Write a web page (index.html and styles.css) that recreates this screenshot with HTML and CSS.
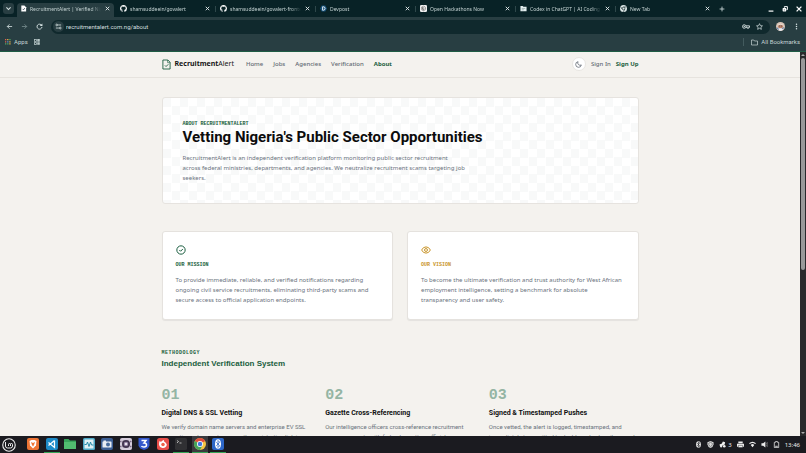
FILE: index.html
```html
<!DOCTYPE html>
<html lang="en">
<head>
<meta charset="utf-8">
<meta name="viewport" content="width=device-width, initial-scale=1">
<title>RecruitmentAlert | Verified</title>
<link rel="stylesheet" href="styles.css">
</head>
<body>
<svg class="sprite" aria-hidden="true">
  <symbol id="github" viewBox="0 0 16 16"><path fill="#fff" d="M8 0C3.58 0 0 3.58 0 8c0 3.54 2.29 6.53 5.47 7.59.4.07.55-.17.55-.38v-1.34c-2.23.48-2.7-1.07-2.7-1.07-.36-.93-.89-1.17-.89-1.17-.73-.5.05-.49.05-.49.81.06 1.23.83 1.23.83.72 1.23 1.88.87 2.34.67.07-.52.28-.88.51-1.08-1.78-.2-3.64-.89-3.64-3.95 0-.87.31-1.59.82-2.15-.08-.2-.36-1.02.08-2.12 0 0 .67-.21 2.2.82a7.6 7.6 0 0 1 4 0c1.53-1.04 2.2-.82 2.2-.82.44 1.1.16 1.92.08 2.12.51.56.82 1.27.82 2.15 0 3.07-1.87 3.75-3.65 3.95.29.25.54.73.54 1.48v2.19c0 .21.15.46.55.38A8 8 0 0 0 16 8c0-4.42-3.58-8-8-8z"/></symbol>
  <symbol id="close" viewBox="0 0 10 10"><path d="M1.5 1.5l7 7M8.5 1.5l-7 7" stroke="#e6eeee" stroke-width="1.8"/></symbol>
</svg>

<header class="browser">
  <div class="tabstrip">
    <button class="tab-search" aria-label="Search tabs"><svg viewBox="0 0 10 10"><path d="M2 3.5l3 3 3-3" fill="none" stroke="#d5e2e2" stroke-width="1.6"/></svg></button>
    <div class="tabs">
      <div class="tab active"><svg class="fav" viewBox="0 0 16 16"><path d="M3 1h7l4 4v10H3z" fill="#fff"/><path d="M6 9l2 2 3-4" fill="none" stroke="#234" stroke-width="1.6"/></svg><span>RecruitmentAlert | Verified Nigeria</span><button aria-label="Close"><svg><use href="#close"/></svg></button></div>
      <div class="tab"><svg class="fav"><use href="#github"/></svg><span>shamsuddeein/govalert</span><button aria-label="Close"><svg><use href="#close"/></svg></button></div>
      <div class="tab"><svg class="fav"><use href="#github"/></svg><span>shamsuddeein/govalert-frontend</span><button aria-label="Close"><svg><use href="#close"/></svg></button></div>
      <div class="tab"><svg class="fav" viewBox="0 0 16 16"><path d="M4 1h8l4 7-4 7H4L0 8z" fill="#14507a"/><path d="M6 4v8h1.500q4 0 4-4t-4-4z" fill="none" stroke="#fff" stroke-width="2"/></svg><span>Devpost</span><button aria-label="Close"><svg><use href="#close"/></svg></button></div>
      <div class="tab"><svg class="fav" viewBox="0 0 16 16"><rect width="16" height="16" rx="3" fill="#f1f1f1"/><g fill="none" stroke="#555" stroke-width="1"><path d="M8 2.500l4.700 2.700v5.500L8 13.500l-4.700-2.800V5.200z"/><path d="M5.500 4v5L8 10.500l4.500-2.600M8 13V8l-4-2.500M10.500 4L6 6.700v5"/></g></svg><span>Open Hackathons Now</span><button aria-label="Close"><svg><use href="#close"/></svg></button></div>
      <div class="tab"><svg class="fav" viewBox="0 0 16 16"><path d="M1 2h5l2 2h7v10H1z" fill="#e3eeee"/><path d="M4 8h8M4 11h5" stroke="#65797b"/></svg><span>Codex in ChatGPT | AI Coding</span><button aria-label="Close"><svg><use href="#close"/></svg></button></div>
      <div class="tab"><svg class="fav" viewBox="0 0 16 16"><circle cx="8" cy="8" r="8" fill="#dce6e6"/><circle cx="8" cy="8" r="3" fill="#dce6e6" stroke="#16292c" stroke-width="1.500"/><path d="M8 4.500h7M5 9.500L1.500 4M11 9.500L7.500 15.500" stroke="#16292c" stroke-width="1.500"/></svg><span>New Tab</span><button aria-label="Close"><svg><use href="#close"/></svg></button></div>
    </div>
    <button class="new-tab" aria-label="New tab"><svg viewBox="0 0 10 10"><path d="M5 1v8M1 5h8" stroke="#cfdddd" stroke-width="1.400"/></svg></button>
    <div class="window-buttons">
      <button aria-label="Minimize"><svg viewBox="0 0 10 10"><path d="M1 8.500h8" stroke="#fff" stroke-width="2"/></svg></button>
      <button aria-label="Restore"><svg viewBox="0 0 10 10"><path d="M4 3V1h5v5H7.500" fill="none" stroke="#fff" stroke-width="1.600"/><rect x="1" y="3.500" width="6" height="5.500" rx="1" fill="#fff"/><path d="M3 6.500h2" stroke="#0b2226"/></svg></button>
      <button aria-label="Close window"><svg viewBox="0 0 10 10"><path d="M1 1l8 8M9 1L1 9" stroke="#fff" stroke-width="2.200"/></svg></button>
    </div>
  </div>
  <div class="toolbar">
    <button aria-label="Back"><svg viewBox="0 0 16 16"><path d="M14 8H3M8 3L3 8l5 5" fill="none" stroke="#dbe7e7" stroke-width="1.800"/></svg></button>
    <button aria-label="Forward"><svg viewBox="0 0 16 16"><path d="M2 8h11M8 3l5 5-5 5" fill="none" stroke="#7c9192" stroke-width="1.800"/></svg></button>
    <button aria-label="Reload"><svg viewBox="0 0 16 16"><path d="M13 5.500A5.700 5.700 0 1 0 13.700 9" fill="none" stroke="#dbe7e7" stroke-width="2"/><path d="M14.500 1v6h-6z" fill="#dbe7e7"/></svg></button>
    <div class="omnibox">
      <button class="site-info" aria-label="Site information"><svg viewBox="0 0 16 16"><g fill="none" stroke="#dbe7e7" stroke-width="1.800"><path d="M7 4.500h7M2 11.500h7"/><circle cx="4" cy="4.500" r="2"/><circle cx="12" cy="11.500" r="2"/></g></svg></button>
      <input type="text" aria-label="Address" value="recruitmentalert.com.ng/about">
      <button class="key" aria-label="Passwords"><svg viewBox="0 0 18 16"><g fill="none" stroke="#dbe7e7" stroke-width="2"><circle cx="5" cy="8" r="4"/><path d="M9 6.500h8v3.500h-2v2h-3v-2H9"/></g><circle cx="5" cy="8" r="1.500" fill="#dbe7e7"/></svg></button>
      <button aria-label="Bookmark this page"><svg viewBox="0 0 16 16"><path d="M8 1.500l2 4.500 4.800.5-3.600 3.200 1 4.800L8 12l-4.200 2.500 1-4.800L1.200 6.500 6 6z" fill="none" stroke="#dbe7e7" stroke-width="1.600"/></svg></button>
    </div>
    <button class="avatar" aria-label="Profile"><svg viewBox="0 0 18 18"><circle cx="9" cy="9" r="9" fill="#d9c6b8"/><circle cx="9" cy="8" r="5" fill="#b5806a"/><path d="M3 6q6-7 12 0l-2 1q-4-3-8 0z" fill="#ecdcd2"/><path d="M4 15q5-5 10 0-5 5-10 0z" fill="#e9eef6"/><path d="M6 8h2M10 8h2" stroke="#34232a"/><path d="M2 11l3 4M15 11l-2 3" stroke="#3c6fb0" stroke-width="2"/></svg></button>
    <button aria-label="Menu"><svg viewBox="0 0 16 16"><g fill="#dbe7e7"><circle cx="8" cy="3" r="1.700"/><circle cx="8" cy="8" r="1.700"/><circle cx="8" cy="13" r="1.700"/></g></svg></button>
  </div>
  <nav class="bookmarks" aria-label="Bookmarks">
    <a href="#"><svg viewBox="0 0 14 14"><g><path fill="#e0604f" d="M0 0h3v3H0zM0 5h3v3H0z"/><path fill="#e8b24a" d="M5 0h3v3H5zM10 10h3v3h-3z"/><path fill="#53a868" d="M10 0h3v3h-3zM0 10h3v3H0z"/><path fill="#5b91e0" d="M5 5h3v3H5z"/><path fill="#e8b24a" d="M10 5h3v3h-3z"/><path fill="#53a868" d="M5 10h3v3H5z"/></g></svg>Apps</a>
    <a href="#" aria-label="Tab groups"><svg viewBox="0 0 14 14"><g fill="none" stroke="#b9c9c9" stroke-width="1.800"><rect x="1" y="1" width="4.500" height="4.500"/><rect x="8.500" y="1" width="4.500" height="4.500"/><rect x="1" y="8.500" width="4.500" height="4.500"/><rect x="8.500" y="8.500" width="4.500" height="4.500"/></g></svg></a>
    <a class="all" href="#"><svg viewBox="0 0 14 14"><path d="M1 2h4.500L7 4h6v8H1z" fill="none" stroke="#d2dfdf" stroke-width="1.300"/></svg>All Bookmarks</a>
  </nav>
</header>

<div class="viewport">
  <div class="page">
    <header class="site-header">
      <div class="wrap">
        <a class="brand" href="#"><svg viewBox="0 0 20 24"><g fill="none" stroke="#1b5e40" stroke-width="2"><path d="M2 2h11l5 5v15H2z"/><path d="M12.500 2v6H18" stroke-width="1.400"/><path d="M6.500 14l2.500 2.500 5-5"/></g></svg><span><b>Recruitment</b>Alert</span></a>
        <nav class="links" aria-label="Main">
          <a href="#">Home</a><a href="#">Jobs</a><a href="#">Agencies</a><a href="#">Verification</a><a class="current" href="#">About</a>
        </nav>
        <div class="account">
          <button class="theme" aria-label="Toggle theme"><svg viewBox="0 0 16 16"><path d="M7 1.500A6.500 6.500 0 1 0 14.500 9 5.500 5.500 0 0 1 7 1.500z" fill="none" stroke="#4e5662" stroke-width="1.600"/></svg></button>
          <a href="#">Sign In</a><a class="current" href="#">Sign Up</a>
        </div>
      </div>
    </header>
    <main class="wrap">
      <section class="hero">
        <p class="eyebrow">ABOUT RECRUITMENTALERT</p>
        <h1>Vetting Nigeria's Public Sector Opportunities</h1>
        <p class="copy">RecruitmentAlert is an independent verification platform monitoring public sector recruitment<br>across federal ministries, departments, and agencies. We neutralize recruitment scams targeting job<br>seekers.</p>
      </section>
      <div class="cards">
        <section class="card">
          <svg viewBox="0 0 24 24"><g fill="none" stroke="#1b5e40" stroke-width="2.400"><circle cx="12" cy="12" r="10"/><path d="M8 12l3 3 5.500-5.500"/></g></svg>
          <h2 class="eyebrow">OUR MISSION</h2>
          <p class="copy">To provide immediate, reliable, and verified notifications regarding<br>ongoing civil service recruitments, eliminating third-party scams and<br>secure access to official application endpoints.</p>
        </section>
        <section class="card">
          <svg viewBox="0 0 24 24"><g fill="none" stroke="#c9952b" stroke-width="2.400"><path d="M1.500 12Q5 4.500 12 4.500T22.500 12Q19 19.500 12 19.500T1.500 12z"/><circle cx="12" cy="12" r="3.500"/></g></svg>
          <h2 class="eyebrow gold">OUR VISION</h2>
          <p class="copy">To become the ultimate verification and trust authority for West African<br>employment intelligence, setting a benchmark for absolute<br>transparency and user safety.</p>
        </section>
      </div>
      <section class="method">
        <p class="eyebrow wide">METHODOLOGY</p>
        <h2>Independent Verification System</h2>
        <div class="steps">
          <article><div class="num">01</div><h3>Digital DNS &amp; SSL Vetting</h3><p>We verify domain name servers and enterprise EV SSL<br>encryption schemas to ensure the registration link is a</p></article>
          <article><div class="num">02</div><h3>Gazette Cross-Referencing</h3><p>Our intelligence officers cross-reference recruitment<br>announcements with federal gazettes, official agency</p></article>
          <article><div class="num">03</div><h3>Signed &amp; Timestamped Pushes</h3><p>Once vetted, the alert is logged, timestamped, and<br>immediately transmitted to dashboard subscribers and</p></article>
        </div>
      </section>
    </main>
  </div>
  <div class="scrollbar" aria-hidden="true">
    <svg viewBox="0 0 6 6"><path d="M1 4l2-2 2 2z" fill="#aaa"/></svg>
    <div class="track"><div class="thumb"></div></div>
    <svg viewBox="0 0 6 6"><path d="M1 2l2 2 2-2z" fill="#aaa"/></svg>
  </div>
</div>

<footer class="taskbar">
  <button class="start" aria-label="Menu"><svg viewBox="0 0 28 28"><circle cx="14" cy="14" r="12.500" fill="none" stroke="#eee" stroke-width="2.200"/><path d="M7 8v8q0 4 4 4h6q4 0 4-4v-3q0-2-2-2t-2 2v3M17 13q0-2-2-2t-2 2v3" fill="none" stroke="#eee" stroke-width="2"/></svg></button>
  <div class="apps">
    <button aria-label="Brave"><svg viewBox="0 0 24 24"><rect width="24" height="24" rx="4" fill="#ee7434"/><path d="M5 6l4-2h6l4 2-1 9-6 6-6-6z" fill="#fff"/><path d="M8 8l4 2 4-2-2 6-2 3-2-3z" fill="#ee7434"/></svg></button>
    <button class="open" aria-label="VS Code"><svg viewBox="0 0 24 24"><rect width="24" height="24" rx="4" fill="#1d8ac6"/><path d="M17 5v14L5 9M17 5L5 15" fill="none" stroke="#fff" stroke-width="2.500"/></svg></button>
    <button aria-label="Files"><svg viewBox="0 0 24 24"><path d="M0 3q0-1 1-1h8l3 3h11q1 0 1 1v15q0 1-1 1H1q-1 0-1-1z" fill="#37a35a"/><path d="M0 8h24v13q0 1-1 1H1q-1 0-1-1z" fill="#51bd70"/></svg></button>
    <button aria-label="System monitor"><svg viewBox="0 0 24 24"><rect width="24" height="24" rx="3" fill="#4daac7"/><rect x="3" y="3" width="18" height="18" fill="#e0f2f5"/><path d="M3 13h4l2-5 3 9 3-9 2 6h4" fill="none" stroke="#268ba8" stroke-width="2"/></svg></button>
    <button aria-label="Screenshot"><svg viewBox="0 0 24 24"><rect width="24" height="24" rx="4" fill="#3c5f94"/><rect x="3" y="7" width="18" height="12" rx="1" fill="#e8edf3"/><circle cx="14" cy="13" r="4" fill="#476b9c"/><path d="M5 5h5v3H5z" fill="#e8edf3"/></svg></button>
    <button aria-label="Screen recorder"><svg viewBox="0 0 24 24"><rect width="24" height="24" rx="4" fill="#d5cddb"/><path d="M0 7h24M0 17h24" stroke="#7e6d89" stroke-width="3" stroke-dasharray="3 2"/><circle cx="12" cy="12" r="8" fill="#40334e"/><circle cx="12" cy="12" r="4.500" fill="#9d8cac"/><circle cx="12" cy="12" r="2" fill="#fff"/></svg></button>
    <button aria-label="3D viewer"><svg viewBox="0 0 24 24"><path d="M1 0h22v15q-2 7-11 9Q3 22 1 15z" fill="#3358cc"/><path d="M7 5h9l-4 5q5 0 5 4t-5 4q-4 0-5-2" fill="none" stroke="#fff" stroke-width="3"/></svg></button>
    <button aria-label="Firefox"><svg viewBox="0 0 24 24"><rect width="24" height="24" rx="5" fill="#e84e49"/><path d="M5 6q2 2 4 1 2-3 5-3-1 3 3 5 4 3 2 7-3 5-8 4-6-1-7-7 0-4 1-7z" fill="#fff"/><circle cx="12" cy="13" r="3.500" fill="#ee6048"/></svg></button>
    <button class="open" aria-label="Terminal"><svg viewBox="0 0 24 24"><rect width="24" height="24" rx="3" fill="#303033"/><path d="M4 5l3 2-3 3M9 10h4" fill="none" stroke="#ddd" stroke-width="1.500"/></svg></button>
    <button class="open focused" aria-label="Chrome"><svg viewBox="0 0 24 24"><circle cx="12" cy="12" r="12" fill="#f5c542"/><path d="M12 12L1.600 6a12 12 0 0 1 20.800 0z" fill="#df4c3d"/><path d="M12 12L1.600 6a12 12 0 0 0 10.400 18l5-9z" fill="#45a45c"/><circle cx="12" cy="12" r="6" fill="#fff"/><circle cx="12" cy="12" r="4.500" fill="#4479dd"/></svg></button>
    <button class="open" aria-label="Bluetooth"><svg viewBox="0 0 24 24"><rect width="24" height="24" rx="4" fill="#2d67c8"/><ellipse cx="12" cy="12" rx="6" ry="9.500" fill="#fff"/><path d="M8.500 8.500l7 7-3.500 3.500V5l3.500 3.500-7 7" fill="none" stroke="#2d67c8" stroke-width="1.500"/></svg></button>
  </div>
  <div class="tray">
    <svg viewBox="0 0 16 16"><ellipse cx="8" cy="8" rx="5.500" ry="7.500" fill="#e6e6e6"/><path d="M5 5l6 6-3 3V2l3 3-6 6" fill="none" stroke="#1b1b20" stroke-width="1.300"/></svg>
    <svg viewBox="0 0 16 16"><path d="M8 0l7 3v5q-1 6-7 8-6-2-7-8V3z" fill="#ddd"/><path d="M8 3l4 2v3q-1 4-4 5-3-1-4-5V5z" fill="none" stroke="#1b1b20"/></svg>
    <span class="count"><svg viewBox="0 0 16 16"><path d="M1 8l5-2 3-5 5 2-1 5-5 2-2 5-3-1z" fill="#eee"/><circle cx="12" cy="12" r="3" fill="#eee"/></svg>3</span>
    <svg viewBox="0 0 16 16"><path d="M3 1h10v4H3zM0 6h16v7H0z" fill="#eee"/><path d="M3 10h10v5H3z" fill="#eee" stroke="#1b1b20"/></svg>
    <svg viewBox="0 0 16 16"><path d="M0 5q8-7 16 0l-2 2q-6-5-12 0zM4 9q4-4 8 0l-4 5z" fill="#eee"/></svg>
    <svg viewBox="0 0 16 16"><path d="M1 5h4l5-4v14l-5-4H1z" fill="#eee"/><path d="M12 4q3 4 0 8M14 2q4 6 0 12" fill="none" stroke="#aaa"/></svg>
    <svg viewBox="0 0 16 16"><path d="M3 3h3V1h4v2h3v12H3z" fill="none" stroke="#eee" stroke-width="1.700"/><path d="M5 11h6v2H5z" fill="#eee"/></svg>
    <time>13:46</time>
  </div>
</footer>
</body>
</html>
```
FILE: styles.css
```css
* { box-sizing: border-box; }
body {
  margin: 0;
  height: 100vh;
  display: flex;
  flex-direction: column;
  overflow: hidden;
  background: #f4f2ee;
  font: 6px/10px "Noto Sans", sans-serif;
  color: #111;
}
h1, h2, h3, p { margin: 0; }
a { color: inherit; text-decoration: none; }
svg { display: block; flex: none; }
button { border: 0; padding: 0; background: none; color: inherit; font: inherit; display: grid; place-items: center; flex: none; }
.sprite { display: none; }

/* Browser frame */
.browser { flex: none; background: #283e42; border-bottom: 1px solid #1f5c45; font: 6px/8px Roboto, sans-serif; color: #c5d3d3; }
.tabstrip { display: flex; align-items: center; height: 17px; padding: 0 4px 0 3px; background: #082226; }
.tab-search { width: 11px; height: 11px; margin-right: 3px; border-radius: 3px; background: #283e42; }
.tab-search svg { width: 7px; height: 7px; }
.tabs { display: flex; flex: 0 1 700px; min-width: 0; align-self: stretch; padding-top: 3px; font: 5px/8px "Noto Sans", sans-serif; }
.tab { display: flex; flex: 1 1 0; min-width: 0; align-items: center; gap: 3px; margin-right: 3px; padding: 0 4px 3px 3px; position: relative; }
.tab.active { background: #283e42; border-radius: 4px 4px 0 0; }
.tab + .tab + .tab::before { content: ""; position: absolute; left: -2px; top: 3px; height: 6px; border-left: 1px solid #2e474a; }
.tab span { flex: 1; min-width: 0; overflow: hidden; white-space: nowrap; mask-image: linear-gradient(90deg, #000 85%, transparent); }
.fav { width: 7px; height: 7px; }
.tab button svg { width: 5px; height: 5px; }
.tab button { width: 6px; }
.new-tab { margin-left: 2px; }
.new-tab svg { width: 6px; height: 6px; }
.window-buttons { display: flex; gap: 8px; margin-left: auto; }
.window-buttons svg { width: 6px; height: 6px; }
.toolbar { display: flex; align-items: center; gap: 8px; height: 19px; padding: 0 6px; }
.toolbar svg { width: 7px; height: 7px; }
.omnibox { display: flex; flex: 1; align-items: center; gap: 6px; height: 14px; padding: 0 7px 0 2px; border-radius: 7px; background: #10292d; }
.omnibox input { flex: 1; min-width: 0; border: 0; padding: 0; background: none; color: #d3dfdf; font: inherit; outline: 0; }
.omnibox .site-info { width: 11px; height: 11px; margin-right: -4px; border-radius: 50%; background: #283e42; }
.omnibox .key svg { width: 8px; }
.toolbar .avatar { margin-left: -2px; }
.toolbar .avatar svg { width: 9px; height: 9px; }
.bookmarks { display: flex; align-items: center; gap: 6px; height: 15px; padding: 0 6px 3px 5px; }
.bookmarks a { display: flex; align-items: center; gap: 3px; }
.bookmarks svg { width: 6px; height: 6px; }
.bookmarks .all { margin-left: auto; padding-left: 7px; border-left: 1px solid #435b5e; }
.bookmarks .all svg { width: 7px; height: 7px; }

/* Web page */
.viewport { flex: 1; min-height: 0; display: flex; }
.page { flex: 1; min-width: 0; overflow: hidden; }
.wrap { max-width: 477px; margin: 0 auto; }
.site-header { border-bottom: 1px solid #e6e3de; color: #626a73; font-weight: 500; }
.site-header .wrap { display: flex; align-items: center; height: 25px; padding-bottom: 1px; }
.brand { display: flex; align-items: center; gap: 4px; color: #151515; font-size: 7px; font-weight: 400; }
.brand svg { width: 9px; height: 11px; }
.links { display: flex; gap: 10px; margin-left: 12px; }
.current { color: #1b5e40; font-weight: 700; }
.account { display: flex; align-items: center; gap: 5px; margin-left: auto; }
.theme { width: 14px; height: 14px; border: 1px solid #e8e6e2; border-radius: 50%; background: #fff; }
.theme svg { width: 7px; height: 7px; }
.hero {
  margin-top: 19px;
  padding: 22px 20px 20px;
  border: 1px solid #e6e3df;
  border-radius: 3px;
  background: #fff repeating-conic-gradient(#fff 0 25%, #f8f9f9 0 50%) 0 0 / 17px 17px;
}
.eyebrow { font: bold 5px/8px "Liberation Mono", monospace; color: #1b5e40; }
.eyebrow.gold { color: #c9952b; }
.eyebrow.wide { letter-spacing: .1em; }
.hero h1 { font: bold 15px/19px Roboto, sans-serif; color: #0c0c0c; white-space: nowrap; }
.copy { color: #6a727d; white-space: nowrap; }
.hero .copy { margin-top: 6px; }
.cards { display: grid; grid-template-columns: repeat(2, minmax(0, 1fr)); gap: 14px; margin-top: 27px; }
.card { padding: 13px 13px 14px; border: 1px solid #e5e2de; border-radius: 3px; background: #fff; box-shadow: 0 1px 1px #0001; }
.card svg { width: 10px; height: 10px; }
.card .eyebrow { margin: 6px 0; }
.method { margin-top: 29px; }
.method h2 { margin-top: 2px; font: bold 8px/10px "Liberation Sans", sans-serif; color: #1b5e40; }
.steps { display: grid; grid-template-columns: repeat(3, minmax(0, 1fr)); gap: 14px; margin-top: 18px; font-family: Roboto, sans-serif; }
.num { font: bold 15px/17px "Liberation Mono", monospace; color: #94b5a4; }
.steps h3 { margin: 4px 0; font-size: 7px; line-height: 10px; }
.steps p { color: #6a727d; white-space: nowrap; }
.scrollbar { width: 6px; display: flex; flex-direction: column; background: #29292b; }
.scrollbar svg { width: 6px; height: 6px; }
.track { flex: 1; }
.thumb { height: 57%; margin: 0 1px; border-radius: 2px; background: #999; }

/* Desktop panel */
.taskbar { flex: none; display: flex; align-items: stretch; height: 17px; padding: 0 6px 0 2px; background: #1b1b20; color: #eee; font: 6px/8px "Noto Sans", sans-serif; }
.start svg { width: 14px; height: 14px; }
.apps { display: flex; flex: 0 1 201px; justify-content: space-between; margin-left: 9px; }
.apps button { width: 16px; border-bottom: 1px solid transparent; }
.apps svg { width: 12px; height: 12px; }
.apps .open { border-color: #35a457; }
.apps .focused { background: #3a3a3e; }
.tray { display: flex; align-items: center; gap: 5px; margin-left: auto; }
.tray svg { width: 7px; height: 7px; }
.count { display: flex; gap: 2px; align-items: center; }
```
